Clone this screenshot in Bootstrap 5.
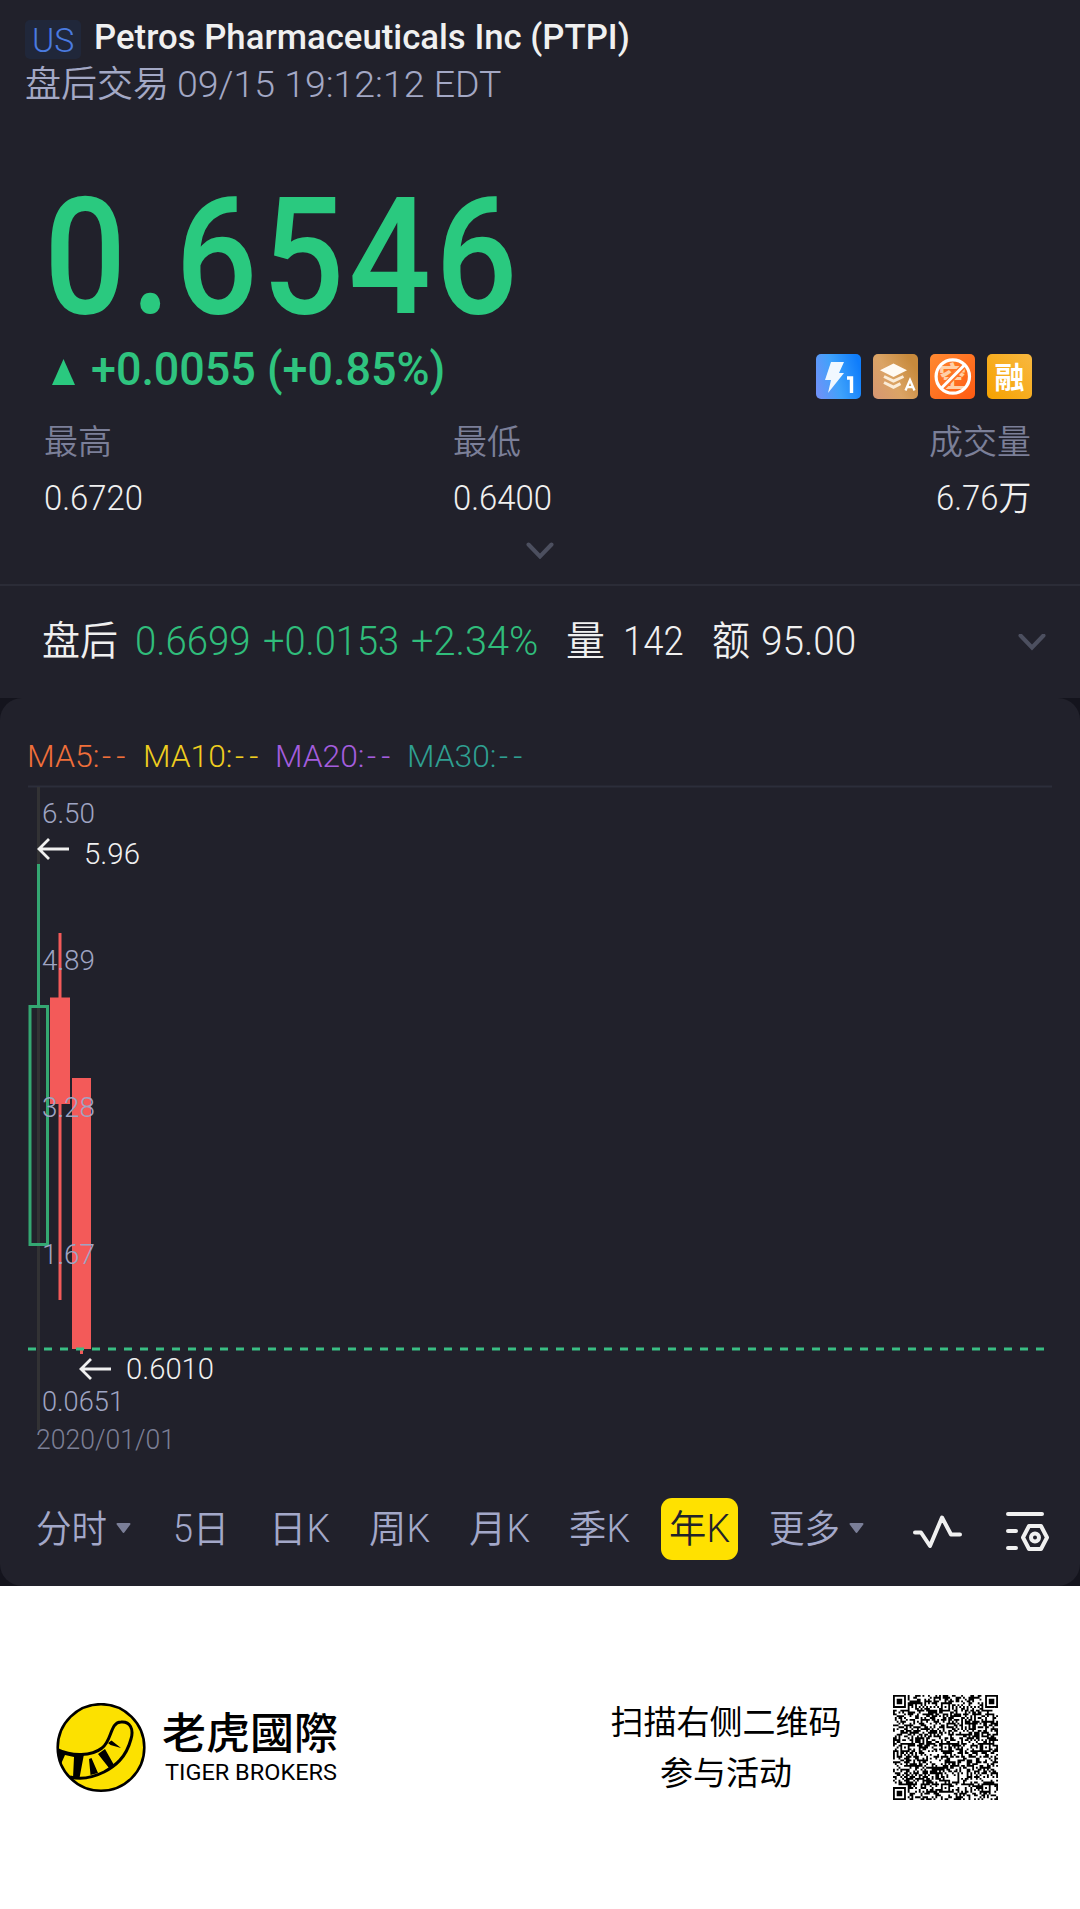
<!DOCTYPE html>
<html lang="zh">
<head>
  <meta charset="UTF-8" />
  <meta name="viewport" content="width=device-width, initial-scale=1.0" />
  <title>PTPI</title>
  <link href="https://cdn.jsdelivr.net/npm/bootstrap@5.3.3/dist/css/bootstrap.min.css" rel="stylesheet"/>
  <style>
    body {
      width: 1080px;
      background: #fff;
      font-family: Roboto, "Noto Sans CJK SC", sans-serif;
      color: #f0f0f0;
      overflow-x: hidden;
    }
    .quote { background: #21212b; height: 698px; }
    .fit { display: inline-block; white-space: nowrap; transform-origin: 0 50%; }
    .slot { display: block; flex: none; }
    .market {
      width: 56px;
      height: 39px;
      margin: 2px 13px 0 25px;
      border-radius: 5px;
      background: #20273a;
      color: #4a7be0;
      font-size: 33px;
      line-height: 42px;
      padding-left: 7px;
    }
    .name-row { padding-top: 18px; height: 58px; }
    .name { font-size: 35px; line-height: 40px; font-weight: 500; }
    .session { height: 53px; line-height: 54px; padding-left: 25px; color: #a3a8c5; }
    .session .zh { font-size: 36px; }
    .session .num { font-size: 37px; }
    .price {
      margin-top: 76px;
      padding-left: 44px;
      height: 140px;
      line-height: 142px;
      font-size: 163px;
      font-weight: 500;
      letter-spacing: .03em;
      color: #2ac97f;
    }
    .change { height: 84px; line-height: 84px; padding: 0 48px 0 52px; font-size: 46px; font-weight: 500; color: #2fc47f; }
    .tags { gap: 12px; padding-top: 27px; }
    .tags svg { display: block; }
    .stats { padding: 0 49px 0 44px; }
    .stats .label { height: 62px; line-height: 62px; font-size: 34px; color: #7b7f98; }
    .stats .value { height: 50px; line-height: 50px; font-size: 34.5px; }
    .stats .low { width: 409px; }
    .stats .low + div { flex: 1; }
    .more { height: 63px; padding-top: 19px; border-bottom: 2px solid #2b2c37; }
    .after { height: 112px; line-height: 111px; font-size: 40px; padding: 0 34px 0 42px; }
    .up { color: #30bd7b; }
    .stage { background: #14141d; }
    .panel { background: #21212b; border-radius: 22px; height: 888px; }
    .ma { padding: 30px 0 0 27px; height: 86px; line-height: 56px; font-size: 32px; }
    .ma i { font-style: normal; letter-spacing: .16em; margin-left: .08em; }
    .ma5 { color: #f06f3a; }
    .ma10 { color: #efcd1f; }
    .ma20 { color: #a45ddd; }
    .ma30 { color: #2f9f91; }
    .chart { display: block; }
    .chart text { font-family: Roboto, sans-serif; }
    .axis { font-size: 28px; fill: #9fa4c2; }
    .tip { font-size: 30px; fill: #f0f0f0; }
    .tabs { height: 62px; line-height: 62px; margin-top: 24px; padding-left: 36px; font-size: 38px; color: #a3a8c9; }
    .tabs .slot { color: inherit; }
    .tabs .chosen { width: 77px; height: 62px; background: #ffe100; border-radius: 11px; padding-left: 8px; }
    .tabs .chosen .fit { color: #22222a; }
    .brand-bar { height: 323px; color: #000; padding: 0 82px 0 56px; }
    .brand { line-height: 42px; font-size: 43.5px; font-weight: 500; margin-top: 8px; }
    .brand-en { line-height: 34px; font-size: 22px; padding-left: 3px; }
    .scan { font-size: 33px; line-height: 51px; text-align: center; width: 232px; }
    .light-face { font-weight: 350; }
  </style>
</head>
<body>
  <div class="quote">
    <div class="name-row d-flex align-items-start">
      <div class="market light-face"><span class="fit" data-w="42">US</span></div>
      <div class="name"><span class="fit" data-w="536">Petros Pharmaceuticals Inc (PTPI)</span></div>
    </div>
    <div class="session d-flex light-face">
      <span class="zh slot"><span class="fit" data-w="144">盘后交易</span></span>
      <span class="num slot ms-2"><span class="fit" data-w="324">09/15 19:12:12 EDT</span></span>
    </div>
    <div class="price"><span class="fit" data-w="478">0.6546</span></div>
    <div class="change d-flex">
      <svg width="23" height="84"><path d="M11.500 32L23 58H0z" fill="#2ac97f"/></svg>
      <span class="slot ms-3"><span class="fit" data-w="354">+0.0055 (+0.85%)</span></span>
      <div class="tags d-flex ms-auto">
        <svg width="45" height="45">
          <defs>
            <linearGradient id="g1" x1="0" y1="0.7" x2="1" y2="0.4"><stop stop-color="#6d92f8"/><stop offset=".45" stop-color="#3fa2fb"/><stop offset="1" stop-color="#0f7dfb"/></linearGradient>
            <linearGradient id="g2" x1="0" y1="1" x2="1" y2="0.4"><stop stop-color="#d69673"/><stop offset=".5" stop-color="#dba465"/><stop offset="1" stop-color="#c88a3c"/></linearGradient>
            <linearGradient id="g3" x1="0" y1="0" x2="1" y2="1"><stop stop-color="#ff8a32"/><stop offset="1" stop-color="#ff5a12"/></linearGradient>
            <linearGradient id="g4" x1="1" y1="0" x2="0" y2="1"><stop stop-color="#f8b840"/><stop offset="1" stop-color="#f6a200"/></linearGradient>
          </defs>
          <rect width="45" height="45" rx="5" fill="url(#g1)"/>
          <path d="M15 8h13l-5 11h5L12 39l3-13H9z" fill="#f1f8ff"/>
          <path d="M31 24h4.500v15" fill="none" stroke="#fff" stroke-width="3.400"/>
        </svg>
        <svg width="45" height="45">
          <rect width="45" height="45" rx="5" fill="url(#g2)"/>
          <path d="M20.500 9.500L34 16.200L20.500 23L7 16.200z" fill="#fffaf3"/>
          <path d="M11 22.500l9.500 4.700l10-4.700M11 28.500l9.500 4.700l7-3.500" fill="none" stroke="#fbecd8" stroke-width="3"/>
          <path d="M32.500 36.500L37 26l4.500 10.500M34 33.200h6" fill="none" stroke="#fff" stroke-width="2.300"/>
        </svg>
        <svg width="45" height="45">
          <rect width="45" height="45" rx="5" fill="url(#g3)"/>
          <text x="22.500" y="33" text-anchor="middle" font-size="28" font-weight="700" fill="#ffd0a8">空</text>
          <path d="M12 34.500L34 11.500" stroke="#ff7426" stroke-width="6"/>
          <circle cx="22.800" cy="22.500" r="16.700" fill="none" stroke="#fff" stroke-width="3.200"/>
          <path d="M11.500 34L34.500 11" stroke="#fff" stroke-width="3"/>
        </svg>
        <svg width="45" height="45">
          <rect width="45" height="45" rx="5" fill="url(#g4)"/>
          <text x="22.500" y="34" text-anchor="middle" font-size="30" font-weight="700" fill="#fff">融</text>
        </svg>
      </div>
    </div>
    <div class="stats d-flex light-face">
      <div class="low">
        <div class="label">最高</div>
        <div class="value"><span class="fit" data-w="99">0.6720</span></div>
      </div>
      <div>
        <div class="label">最低</div>
        <div class="value"><span class="fit" data-w="99">0.6400</span></div>
      </div>
      <div class="text-end">
        <div class="label">成交量</div>
        <div class="value"><span class="fit" data-w="95">6.76万</span></div>
      </div>
    </div>
    <div class="more text-center">
      <svg class="d-block mx-auto" width="28" height="17"><path d="M2.500 2.500L14 14.500L25.500 2.500" fill="none" stroke="#4c4f5f" stroke-width="4" stroke-linecap="round"/></svg>
    </div>
    <div class="after d-flex light-face">
      <span class="slot" style="width: 93px"><span class="fit" data-w="76">盘后</span></span>
      <span class="slot up" style="width: 128px"><span class="fit" data-w="116">0.6699</span></span>
      <span class="slot up" style="width: 148px"><span class="fit" data-w="136">+0.0153</span></span>
      <span class="slot up" style="width: 155px"><span class="fit" data-w="127">+2.34%</span></span>
      <span class="slot" style="width: 57px"><span class="fit" data-w="39">量</span></span>
      <span class="slot" style="width: 89px"><span class="fit" data-w="61">142</span></span>
      <span class="slot" style="width: 49px"><span class="fit" data-w="38">额</span></span>
      <span class="slot"><span class="fit" data-w="95">95.00</span></span>
      <svg class="align-self-center ms-auto" width="28" height="17"><path d="M2.500 1.500L14 13.500L25.500 1.500" fill="none" stroke="#4c4f5f" stroke-width="4" stroke-linecap="round"/></svg>
    </div>
  </div>

  <div class="stage">
    <div class="panel">
      <div class="ma d-flex light-face">
        <span class="slot ma5" style="width: 116px"><span class="fit" data-w="104">MA5:<i>--</i></span></span>
        <span class="slot ma10" style="width: 132px"><span class="fit" data-w="120">MA10:<i>--</i></span></span>
        <span class="slot ma20" style="width: 132px"><span class="fit" data-w="120">MA20:<i>--</i></span></span>
        <span class="slot ma30"><span class="fit" data-w="120">MA30:<i>--</i></span></span>
      </div>
      <svg class="chart" width="1080" height="690" viewBox="0 784 1080 690">
        <path d="M28 786.500H1052" stroke="#2c2e3b" stroke-width="2"/>
        <path d="M38.500 787V1430" stroke="#323234" stroke-width="3"/>
        <g fill="none" stroke="#34a772" stroke-width="3">
          <path d="M38.500 864V1006"/>
          <rect x="30" y="1006.500" width="17.500" height="238"/>
        </g>
        <g fill="#f35a59">
          <rect x="58.500" y="933" width="3" height="367"/>
          <rect x="50" y="997.500" width="20" height="106.500"/>
          <rect x="72" y="1078" width="19" height="271"/>
          <rect x="80" y="1349" width="3" height="5"/>
        </g>
        <path d="M28 1349H1044" stroke="#39bd83" stroke-width="3" stroke-dasharray="8 8"/>
        <g class="axis light-face">
          <text x="42" y="823" textLength="53" lengthAdjust="spacingAndGlyphs">6.50</text>
          <text x="42" y="970" textLength="53" lengthAdjust="spacingAndGlyphs">4.89</text>
          <text x="42" y="1117" textLength="53" lengthAdjust="spacingAndGlyphs">3.28</text>
          <text x="42" y="1264" textLength="53" lengthAdjust="spacingAndGlyphs">1.67</text>
          <text x="42" y="1411" textLength="82" lengthAdjust="spacingAndGlyphs">0.0651</text>
          <text x="36" y="1449" textLength="139" lengthAdjust="spacingAndGlyphs" fill="#7b7f96">2020/01/01</text>
        </g>
        <g class="tip light-face">
          <text x="84" y="863.500" textLength="56" lengthAdjust="spacingAndGlyphs">5.96</text>
          <text x="126" y="1378.500" textLength="88" lengthAdjust="spacingAndGlyphs">0.6010</text>
        </g>
        <g fill="none" stroke="#f0f0f0" stroke-width="2.800">
          <path d="M69 849H39M49 839L39 849L49 859"/>
          <path d="M111 1369H81M91 1359L81 1369L91 1379"/>
        </g>
      </svg>
      <div class="tabs d-flex light-face">
        <span class="slot" style="width: 80px"><span class="fit" data-w="71">分时</span></span>
        <svg class="slot" style="width: 57px" height="62"><path d="M1.500 26h12l-6 8z" fill="#7b7f98" stroke="#7b7f98" stroke-width="2" stroke-linejoin="round"/></svg>
        <span class="slot" style="width: 96px"><span class="fit" data-w="56">5日</span></span>
        <span class="slot" style="width: 100px"><span class="fit" data-w="61">日K</span></span>
        <span class="slot" style="width: 100px"><span class="fit" data-w="61">周K</span></span>
        <span class="slot" style="width: 100px"><span class="fit" data-w="61">月K</span></span>
        <span class="slot" style="width: 92px"><span class="fit" data-w="61">季K</span></span>
        <span class="slot chosen me-auto"><span class="fit" data-w="61">年K</span></span>
        <span class="slot" style="width: 80px"><span class="fit" data-w="71">更多</span></span>
        <svg class="slot" style="width: 64px" height="62"><path d="M1.500 26h12l-6 8z" fill="#7b7f98" stroke="#7b7f98" stroke-width="2" stroke-linejoin="round"/></svg>
        <svg class="slot" style="width: 92px" height="62"><path d="M2 34.500h6l9 13.500L29 19.500L38 36.500h9" fill="none" stroke="#f0f0f0" stroke-width="4" stroke-linecap="round" stroke-linejoin="round"/></svg>
        <svg class="slot" style="width: 75px" height="62" fill="none" stroke="#f0f0f0" stroke-width="4" stroke-linecap="round" stroke-linejoin="round">
          <path d="M3 16h34M3 33h8M3 50h8M24 28h12l6 11.500L36 51H24l-6-11.500z"/>
          <circle cx="30" cy="39.500" r="4"/>
        </svg>
      </div>
    </div>
  </div>

  <div class="brand-bar d-flex align-items-center">
    <svg width="90" height="90" viewBox="0 0 90 90">
      <defs><clipPath id="disc"><circle cx="45" cy="45" r="43"/></clipPath></defs>
      <circle cx="45" cy="44.500" r="43.300" fill="#fce100"/>
      <g clip-path="url(#disc)">
        <path d="M0 46C16 54 36 53 46 45C56 38 54 19 65 19C74 18 78 26 75 36C70 55 59 63 48 69C38 74 26 77 14 74" fill="none" stroke="#000" stroke-width="3"/>
        <path d="M0 46L16 51L28 51L23.500 75L17 75L18 54L9 52L5 61L0 62zM33 56L35.500 55L42 70L34.500 72zM42 51L49 46L58 62L53 65zM52 40L55.500 37.500L65 45L54.500 42z" fill="#000"/>
      </g>
      <circle cx="45" cy="44.500" r="43.300" fill="none" stroke="#000" stroke-width="2.600"/>
    </svg>
    <div style="margin-left: 16px">
      <div class="brand"><span class="fit" data-w="176">老虎國際</span></div>
      <div class="brand-en"><span class="fit" data-w="172">TIGER BROKERS</span></div>
    </div>
    <div class="scan ms-auto">扫描右侧二维码<br>参与活动</div>
    <svg id="qr" width="105" height="105" viewBox="0 0 57 57" style="margin-left: 51px"></svg>
  </div>

  <script>
    // squeeze each label to the width of its slot
    function fitText() {
      document.querySelectorAll(".fit").forEach((el) => {
        const natural = el.offsetWidth;
        const w = Number(el.dataset.w);
        el.style.transform = `scaleX(${w / natural})`;
        el.style.marginRight = `${w - natural}px`;
      });
    }

    function drawCode() {
      const n = 57;
      let seed = 20917;
      let d = "";
      const ring = (x, y, cx, cy) => Math.max(Math.abs(x - cx), Math.abs(y - cy));
      for (let y = 0; y < n; y++) {
        for (let x = 0; x < n; x++) {
          seed = (seed * 1103515245 + 12345) % 2147483648;
          let on = seed / 2147483648 > 0.5;
          if (x === 6 || y === 6) on = (x + y) % 2 === 0;
          [6, 28, 50].forEach((cx) => [6, 28, 50].forEach((cy) => {
            const r = ring(x, y, cx, cy);
            if (r <= 2) on = r !== 1;
          }));
          [[3, 3], [n - 4, 3], [3, n - 4]].forEach(([cx, cy]) => {
            const r = ring(x, y, cx, cy);
            if (r <= 4) on = r === 3 || r < 2;
          });
          if (on) d += `M${x} ${y}h1v1h-1z`;
        }
      }
      document.getElementById("qr").innerHTML = `<path d="${d}" fill="#000"/>`;
    }

    fitText();
    drawCode();
  </script>
  <script src="https://cdn.jsdelivr.net/npm/bootstrap@5.3.3/dist/js/bootstrap.bundle.min.js"></script>
</body>
</html>
